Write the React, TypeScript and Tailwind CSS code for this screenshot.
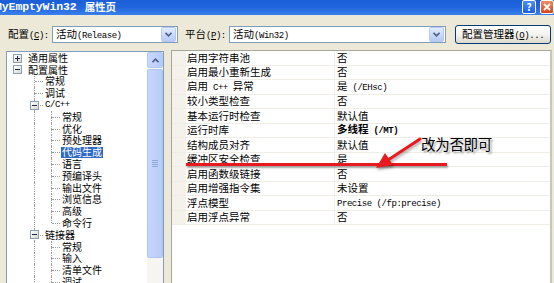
import type { ReactNode } from "react";

// latin runs are narrower than the CJK glyphs in this dialog
function L({ children }: { children: ReactNode }) {
  return (
    <span className="font-['Liberation_Mono',monospace] text-[9px] tracking-[-0.45px]">
      {children}
    </span>
  );
}

function DropBtn() {
  return (
    <div className="flex h-[15px] w-[15px] items-center justify-center rounded-[2px] border border-[#b7c9f3] bg-linear-to-b from-[#e3ecff] to-[#b4c9f6]">
      <svg width="7" height="5" viewBox="0 0 7 5">
        <path d="M0.5 0.8 L3.5 3.8 L6.5 0.8" fill="none" stroke="#4d6185" strokeWidth="1.6" />
      </svg>
    </div>
  );
}

function Combo({ width, children }: { width: string; children: ReactNode }) {
  return (
    <div className={`flex h-[17px] items-center justify-between border border-[#7f9db9] bg-white pl-[3px] pr-px ${width}`}>
      <span className="leading-none">{children}</span>
      <DropBtn />
    </div>
  );
}

type TreeRow = {
  text: string;
  level: number;
  box?: "+" | "-";
  guides?: boolean[];
  last?: boolean;
  selected?: boolean;
};

const tree: TreeRow[] = [
  { text: "通用属性", level: 0, box: "+" },
  { text: "配置属性", level: 0, box: "-" },
  { text: "常规", level: 1 },
  { text: "调试", level: 1 },
  { text: "C/C++", level: 1, box: "-" },
  { text: "常规", level: 2, guides: [true] },
  { text: "优化", level: 2, guides: [true] },
  { text: "预处理器", level: 2, guides: [true] },
  { text: "代码生成", level: 2, guides: [true], selected: true },
  { text: "语言", level: 2, guides: [true] },
  { text: "预编译头", level: 2, guides: [true] },
  { text: "输出文件", level: 2, guides: [true] },
  { text: "浏览信息", level: 2, guides: [true] },
  { text: "高级", level: 2, guides: [true] },
  { text: "命令行", level: 2, guides: [true], last: true },
  { text: "链接器", level: 1, box: "-" },
  { text: "常规", level: 2, guides: [true] },
  { text: "输入", level: 2, guides: [true] },
  { text: "清单文件", level: 2, guides: [true] },
  { text: "调试", level: 2, guides: [true] },
];

function Box({ kind }: { kind: "+" | "-" }) {
  return (
    <span className="absolute left-[4px] top-[1.5px] flex h-[9px] w-[9px] items-center justify-center border border-[#8d9fb3] bg-linear-to-br from-white to-[#d8d8d0]">
      <span className="absolute h-px w-[5px] bg-[#1b2c4a]" />
      {kind === "+" && <span className="absolute h-[5px] w-px bg-[#1b2c4a]" />}
    </span>
  );
}

function Connector({ row }: { row: TreeRow }) {
  const lines = row.level > 0;
  return (
    <span className="relative h-full w-[17px] shrink-0">
      {lines && (
        <>
          <span className="absolute left-[8px] top-0 h-1/2 border-l border-dotted border-[#a0a0a0]" />
          {!row.last && (
            <span className="absolute bottom-0 left-[8px] h-1/2 border-l border-dotted border-[#a0a0a0]" />
          )}
          <span className="absolute left-[9px] top-1/2 w-[8px] border-t border-dotted border-[#a0a0a0]" />
        </>
      )}
      {row.box && <Box kind={row.box} />}
    </span>
  );
}

type PropRow = { name: ReactNode; value: ReactNode; bold?: boolean };

const props: PropRow[] = [
  { name: "启用字符串池", value: "否" },
  { name: "启用最小重新生成", value: "否" },
  { name: <>启用<L>&nbsp;C++&nbsp;</L>异常</>, value: <>是<L>&nbsp;(/EHsc)</L></> },
  { name: "较小类型检查", value: "否" },
  { name: "基本运行时检查", value: "默认值" },
  { name: "运行时库", value: <>多线程<L>&nbsp;(/MT)</L></>, bold: true },
  { name: "结构成员对齐", value: "默认值" },
  { name: "缓冲区安全检查", value: "是" },
  { name: "启用函数级链接", value: "否" },
  { name: "启用增强指令集", value: "未设置" },
  { name: "浮点模型", value: <L>Precise (/fp:precise)</L> },
  { name: "启用浮点异常", value: "否" },
];

export default function App() {
  return (
    <div className="relative h-[283px] w-[554px] overflow-hidden bg-[#ece9d8] font-['Noto_Sans_CJK_SC',sans-serif] text-[10.5px] text-black">
      {/* title bar */}
      <div className="flex h-[15px] items-start justify-between bg-linear-to-b from-[#1b5ed8] via-[#2166de] to-[#3a80ec]">
        <div className="-ml-[5px] flex h-[14px] items-center gap-[8px] font-bold text-white">
          <span className="font-['Liberation_Mono',monospace] text-[11.5px] tracking-[-0.1px]">MyEmptyWin32</span>
          <span className="text-[10.5px]">属性页</span>
        </div>
        <div className="flex gap-[4px]">
          <div className="flex h-[14px] w-[14px] items-center justify-center rounded-[2px] border border-white bg-linear-to-b from-[#4d8ff5] to-[#1c5ee0] text-[10px] font-bold leading-none text-white">
            ?
          </div>
          <div className="flex h-[14px] w-[14px] items-center justify-center rounded-[2px] border border-white bg-linear-to-b from-[#f08a64] to-[#d4441a]">
            <svg width="8" height="8" viewBox="0 0 8 8">
              <path d="M1 1 L7 7 M7 1 L1 7" stroke="white" strokeWidth="1.8" />
            </svg>
          </div>
        </div>
      </div>

      {/* config row */}
      <div className="flex items-center pl-[8px] pt-[10px]">
        <span className="w-[44px] leading-none">
          配置<L>(<u>C</u>):</L>
        </span>
        <Combo width="w-[126px]">
          活动<L>(Release)</L>
        </Combo>
        <span className="ml-[7px] w-[44px] leading-none">
          平台<L>(<u>P</u>):</L>
        </span>
        <Combo width="w-[217px]">
          活动<L>(Win32)</L>
        </Combo>
        <div className="ml-[9px] flex h-[19px] w-[96px] items-center justify-center rounded-[3px] border border-[#003c74] bg-linear-to-b from-white via-[#f4f3ee] to-[#dcd9cc]">
          <span className="leading-none">
            配置管理器<L>(<u>O</u>)...</L>
          </span>
        </div>
      </div>

      {/* body */}
      <div className="mt-[6px] flex pl-[6px]">
        {/* tree */}
        <div className="mt-px flex h-[240px] w-[158px] border border-[#7f9db9] bg-white">
          <div className="flex-1 overflow-hidden pl-[2px] text-[10px]">
            {tree.map((row, i) => (
              <div key={i} className="flex h-[11.8px] items-center">
                {Array.from({ length: row.level }).map((_, k) => (
                  <span key={k} className="relative h-full w-[17px] shrink-0">
                    {row.guides?.[k - 1] && (
                      <span className="absolute left-[8px] top-0 h-full border-l border-dotted border-[#a0a0a0]" />
                    )}
                  </span>
                ))}
                <Connector row={row} />
                <span
                  className={`ml-px flex h-[11px] items-center whitespace-nowrap px-px leading-none ${
                    row.selected ? "bg-[#316ac5] text-white" : ""
                  }`}
                >
                  {row.text === "C/C++" ? <L>C/C++</L> : row.text}
                </span>
              </div>
            ))}
          </div>
          {/* scrollbar */}
          <div className="flex w-[16px] flex-col bg-[#f6f5f0]">
            <div className="flex h-[16px] items-center justify-center rounded-[2px] border border-[#b6c9f4] bg-linear-to-r from-[#c9d8fd] to-[#b6caf8]">
              <svg width="7" height="5" viewBox="0 0 7 5">
                <path d="M0.5 4.2 L3.5 1.2 L6.5 4.2" fill="none" stroke="#4d6185" strokeWidth="1.6" />
              </svg>
            </div>
            <div className="mt-px flex h-[189px] flex-col items-center justify-center gap-px rounded-[2px] border border-[#b0c4f2] bg-linear-to-r from-[#c6d6fd] to-[#b8ccf8]">
              <span className="h-px w-[6px] bg-[#8fa8e0]" />
              <span className="h-px w-[6px] bg-[#8fa8e0]" />
              <span className="h-px w-[6px] bg-[#8fa8e0]" />
              <span className="h-px w-[6px] bg-[#8fa8e0]" />
            </div>
          </div>
        </div>

        {/* property grid */}
        <div className="ml-[7px] h-[240px] w-[381px] border border-r-2 border-[#a7a69c] border-r-[#c9c7bb] bg-white">
          {props.map((p, i) => (
            <div key={i} className="flex h-[14.5px] items-center border-b border-[#efede4]">
              <span className="h-full w-[14px] shrink-0 bg-[#f4f2ea]" />
              <span className="flex h-full w-[149px] shrink-0 items-center border-r border-[#efede4] pl-px">
                <span className="leading-none">{p.name}</span>
              </span>
              <span className={`pl-[2px] leading-none ${p.bold ? "font-bold" : ""}`}>{p.value}</span>
            </div>
          ))}
        </div>
      </div>

      {/* red annotation */}
      <div className="absolute left-[186px] top-[162.5px] h-[3px] w-[261px] bg-[#e81a1f] shadow-[1px_2px_2px_rgba(0,0,0,0.35)]" />
      <svg className="absolute left-[370px] top-[132px]" width="56" height="42" viewBox="370 132 56 42">
        <g filter="drop-shadow(1px 2px 1.5px rgba(0,0,0,0.35))">
          <path d="M420 139 L388 160" stroke="#e81a1f" strokeWidth="3" strokeLinecap="round" />
          <path d="M376 168 L393 165 L385 153 Z" fill="#e81a1f" />
        </g>
      </svg>
      <div className="absolute left-[421px] top-[137px] text-[14.5px] leading-none tracking-[-0.3px] [text-shadow:2px_2px_2px_rgba(0,0,0,0.35)]">
        改为否即可
      </div>
    </div>
  );
}
